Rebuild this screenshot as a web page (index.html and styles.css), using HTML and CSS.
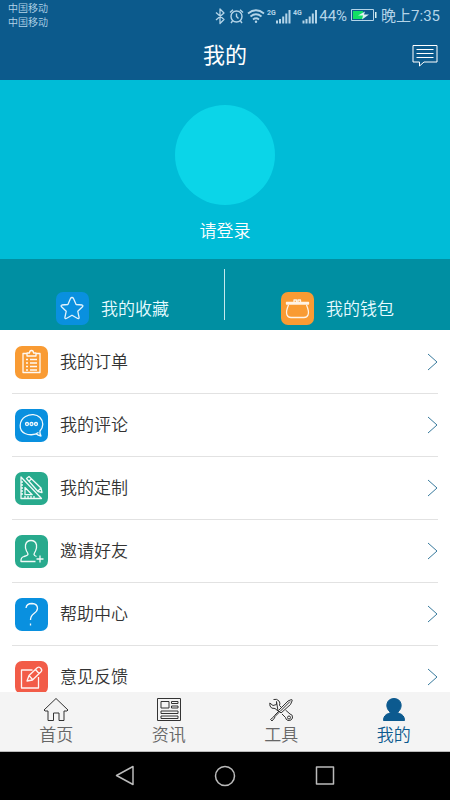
FILE: index.html
```html
<!DOCTYPE html>
<html lang="zh-CN">
<head>
<meta charset="utf-8">
<meta name="viewport" content="width=device-width, initial-scale=1">
<title>我的</title>
<link rel="stylesheet" href="styles.css">
</head>
<body>
<header class="header">
  <div class="status">
    <div class="carriers"><span>中国移动</span><span>中国移动</span></div>
    <div class="indicators">
      <svg width="104" height="18" viewBox="0 0 104 18" aria-hidden="true">
        <path d="M1 5.500l8 7-4 4V2l4 4-8 7" stroke-width="1.300"/>
        <g stroke-width="1.400"><circle cx="21.500" cy="9.500" r="5.500"/><path d="M21.500 6.500v3l2 2M15 5.500l3-2.800M28 5.500l-3-2.800M17.500 14l-1.500 2M25.500 14l1.500 2"/></g>
        <path d="M33 6.500q8-6.500 16 0M35.500 9.500q5.500-4.500 11 0M38 12.500q3-2.500 6 0" stroke-width="1.800"/><circle class="solid" cx="41" cy="14.800" r="1.200"/>
        <path class="solid" d="M61 13.500h2v3h-2zM64 12h2v4.500h-2zM67.200 9.500h2v7h-2zM70.300 6.500h2v10h-2zM73.500 3h2v13.500h-2zM87.500 13.500h2v3h-2zM90.500 12h2v4.500h-2zM93.700 9.500h2v7h-2zM96.800 6.500h2v10h-2zM100 3h2v13.500h-2z"/>
        <text x="52" y="8">2G</text><text x="78" y="8">4G</text>
      </svg>
      <span>44%</span>
      <svg class="battery" width="26" height="13" viewBox="0 0 26 13" aria-hidden="true"><rect x=".5" y=".5" width="22" height="11"/><path class="charge" d="M2 2h10v8H2z"/><path class="bolt" d="M7 6.500l7-4-1 3h5l-7 5 1-4zM24 3h1.500v6H24z"/></svg>
      <span>晚上7:35</span>
    </div>
  </div>
  <div class="titlebar">
    <h1>我的</h1>
    <button class="message" aria-label="消息"><svg width="26" height="24" viewBox="0 0 26 24"><path d="M1 1.500h24v16.500H12l-4.500 4V18H1zM4.500 5.500h17M4.500 9.500h17M4.500 13.500h17"/></svg></button>
  </div>
</header>

<main class="content">
  <section class="profile">
    <div class="avatar"></div>
    <a class="login" href="#login">请登录</a>
  </section>
  <nav class="shortcuts" aria-label="快捷入口">
    <a href="#favorites"><svg class="tile blue" viewBox="0 0 33 33"><path d="M16 5.500q1 0 1.500 1l2.600 6 6 .5q1.400.5.400 1.800l-4.700 4.500 1.300 6.200q0 1.500-1.400 1L16 23.200l-5.700 3.300q-1.400.5-1.400-1l1.300-6.200-4.700-4.500q-1-1.300.4-1.800l6-.5 2.600-6q.5-1 1.500-1z"/></svg><span>我的收藏</span></a>
    <a href="#wallet"><svg class="tile orange" viewBox="0 0 33 33"><path d="M5.500 10.500h22v1.500h-22zM7.500 13q-3 7-1.500 10 1 2.500 4 2.500h13q3 0 4-2.500 1.500-3-1.500-10M13 10V8h2.500v2m1.500 0V8h2.500v2"/></svg><span>我的钱包</span></a>
  </nav>
  <ul class="menu">
    <li><a href="#orders"><svg class="tile orange" viewBox="0 0 33 33"><path d="M11.500 7.500H8v19h17v-19h-3.500M12 10V7h2.500q0-2.500 2-2.500t2 2.500H21v3z"/><path d="M11 13.500h2m2 0h7M11 17h2m2 0h7M11 20.500h2m2 0h7M11 24h2m2 0h7"/></svg><span>我的订单</span><svg class="chevron" viewBox="0 0 11 18"><path d="M1 1l9 8-9 8"/></svg></a></li>
    <li><a href="#comments"><svg class="tile blue" viewBox="0 0 33 33"><path d="M23.500 23.500c-4 3-10 2.700-13.500 1-7-3.500-6-13 .5-17 5-3 11-2.500 14.500 1 4 4 3.500 9.500 0 13.500q-.5 3 1 5-3-.5-5-2.200"/><circle cx="12" cy="15" r="1.500"/><circle cx="16.500" cy="15" r="1.500"/><circle cx="21" cy="15" r="1.500"/></svg><span>我的评论</span><svg class="chevron" viewBox="0 0 11 18"><path d="M1 1l9 8-9 8"/></svg></a></li>
    <li><a href="#custom"><svg class="tile green" viewBox="0 0 33 33"><path d="M6 5v21.500h20.500zM10 15.500v7.200h7.200zM6 10h2M6 13h2M6 16h2M6 19h2M6 22h2M10 26v-2M13 26v-2M16 26v-2M19 26v-2M11.500 6.500l2.500-2 12 11.500 1 4.500-4-1zM14 9l2.500-2M23 19l3-3"/></svg><span>我的定制</span><svg class="chevron" viewBox="0 0 11 18"><path d="M1 1l9 8-9 8"/></svg></a></li>
    <li><a href="#invite"><svg class="tile green" viewBox="0 0 33 33"><path d="M20.500 26.500H6q-.5-4 3-5 4-1 4-2.200 0-1-1.500-3.300-1.500-3-1-6 1-4.500 5.500-4.500t5.500 4.500q.5 3-1 6-1.500 2.500-1.500 3.500t2.500 2M25 20.500v7M21.500 24h7"/></svg><span>邀请好友</span><svg class="chevron" viewBox="0 0 11 18"><path d="M1 1l9 8-9 8"/></svg></a></li>
    <li><a href="#help"><svg class="tile blue" viewBox="0 0 33 33"><path d="M11 10q.5-4.500 6-4.500 5.500.2 5.500 4.800 0 2.700-3.500 5.200t-3.500 6.500M15.500 25.500v2"/></svg><span>帮助中心</span><svg class="chevron" viewBox="0 0 11 18"><path d="M1 1l9 8-9 8"/></svg></a></li>
    <li><a href="#feedback"><svg class="tile red" viewBox="0 0 33 33"><path d="M17.500 9H6.500v18h17V16M12 20l2-5.500 8.500-8q2-1 3.500 1t0 3.200l-8.500 8.300zM14 14.500l3.500 4M20.500 8.500l3.500 4"/></svg><span>意见反馈</span><svg class="chevron" viewBox="0 0 11 18"><path d="M1 1l9 8-9 8"/></svg></a></li>
  </ul>
</main>

<nav class="tabs" aria-label="主导航">
  <a href="#home"><svg viewBox="0 0 26 26"><path d="M1 13L13 1.500 25 13l-1 1h-3v9.500h-5V16h-5.500v7.500H5V14H2z"/></svg><span>首页</span></a>
  <a href="#news"><svg viewBox="0 0 26 26"><path d="M1.500 1.500h23v22h-23zM5 4.500h8v6.500H5zM15.500 4.500H22v2h-6.500zM15.500 9H22v2h-6.500zM5 14h17v2.500H5zM5 19h17v2.500H5z"/></svg><span>资讯</span></a>
  <a href="#tools"><svg viewBox="0 0 26 26"><path d="M5.500 2.500q3.500-1 5.500 1.500 1.500 2 .5 4.500l2 2M10 14l-3-2.500Q3 12 2 9l-.2-3L5 8.500l3.500-1L8.500 4.500z"/><path d="M10.500 13.500L20 4l3.500-1.500q1 0 .5 1.500l-1.500 3.500-9.500 8.500zM12 14.500l10-10M11.500 15L7 19.500l-.5 1.500L4 24l-1.500-1.500L5.500 20l1-1.500 4.500-4.500M17.500 13l4.500 4q3 .5 2.500 4-1 3-4.500 2.500-2.500-1-2.500-3L14 17"/><circle cx="21" cy="20.500" r="1.500"/></svg><span>工具</span></a>
  <a class="active" href="#me" aria-current="page"><svg viewBox="0 0 26 26"><path d="M2.500 23.500q0-5.500 5-7l2-1C3.500 11 5 1.500 13 1.500s9.500 9.500 3.500 14l2 1q5 1.500 5 7z"/></svg><span>我的</span></a>
</nav>
<footer class="system">
  <button aria-label="返回"><svg viewBox="0 0 22 22"><path d="M19 1.500v18L2.500 10.500z"/></svg></button>
  <button aria-label="主屏幕"><svg viewBox="0 0 22 22"><circle cx="11" cy="11" r="9.500"/></svg></button>
  <button aria-label="最近任务"><svg viewBox="0 0 22 22"><path d="M2.500 2h17v17h-17z"/></svg></button>
</footer>
</body>
</html>
```
FILE: styles.css
```css
* {
  box-sizing: border-box;
}

body {
  display: flex;
  flex-direction: column;
  height: 100vh;
  margin: 0;
  background: #fff;
  color: #333;
  font-family: Roboto, "Noto Sans CJK SC", sans-serif;
  font-size: 17px;
  font-weight: 350;
  line-height: 24px;
}

a {
  color: inherit;
  text-decoration: none;
}

button {
  display: flex;
  padding: 0;
  border: 0;
  background: none;
  color: inherit;
}

svg {
  display: block;
  flex: none;
  fill: none;
  stroke: currentColor;
  stroke-linejoin: round;
}

.header {
  flex: none;
  background: #0c5a8c;
  color: #fff;
}

.status {
  display: flex;
  justify-content: space-between;
  height: 31px;
  padding: 2px 10px 0 8px;
  color: #b4d4e8;
}

.carriers {
  display: flex;
  flex-direction: column;
  font-size: 10px;
  line-height: 14px;
}

.indicators {
  display: flex;
  align-items: center;
  height: 27px;
  font-size: 15px;
  font-weight: 400;
  line-height: 20px;
}

.indicators text {
  fill: currentColor;
  stroke: none;
  font-size: 7px;
  font-weight: 700;
}

.solid {
  fill: currentColor;
  stroke: none;
}

.battery {
  margin: 0 4px;
}

.charge {
  fill: #10df65;
  stroke: none;
}

.bolt {
  fill: #d8f2f0;
  stroke: none;
}

.titlebar {
  display: grid;
  grid-template-columns: 26px 1fr 26px;
  align-items: center;
  height: 49px;
  padding: 0 12px;
}

h1 {
  grid-column: 2;
  margin: 0;
  font-size: 22px;
  font-weight: 400;
  line-height: 32px;
  text-align: center;
}

.content {
  flex: 1;
  min-height: 0;
  overflow-y: auto;
  scrollbar-width: none;
}

.profile {
  display: flex;
  flex-direction: column;
  align-items: center;
  gap: 14px;
  padding: 25px 0 16px;
  background: #00bcd7;
  color: #fff;
}

.avatar {
  width: 100px;
  height: 100px;
  border-radius: 50%;
  background: #0bd5e8;
}

.shortcuts {
  display: flex;
  position: relative;
  background: #008fa2;
  color: #e6fbff;
}

.shortcuts::after {
  content: "";
  position: absolute;
  top: 10px;
  bottom: 10px;
  left: calc(50% - 1px);
  width: 1px;
  background: #c5e9ed;
}

.shortcuts a {
  display: flex;
  flex: 1;
  align-items: center;
  justify-content: center;
  gap: 12px;
  padding: 33px 0 5px;
}

.tile {
  width: 33px;
  height: 33px;
  border-radius: 7px;
  color: #fffffff0;
  stroke-width: 1.3;
}

.shortcuts .tile {
  color: #ffffffe0;
}

.blue {
  background: #0990df;
}

.orange {
  background: #f99b33;
}

.green {
  background: #28aa8d;
}

.red {
  background: #f25c48;
}

.menu {
  margin: 0;
  padding: 1px 12px 0;
  list-style: none;
}

.menu li {
  border-bottom: 1px solid #e2e2e2;
}

.menu a {
  display: flex;
  align-items: center;
  gap: 12px;
  height: 62px;
  padding-left: 3px;
}

.chevron {
  width: 11px;
  height: 18px;
  margin-left: auto;
  color: #387a9d;
}

.tabs {
  display: flex;
  flex: none;
  height: 60px;
  padding-top: 5px;
  border-bottom: 1px solid #bbb;
  background: #f4f4f4;
  color: #666;
}

.tabs a {
  display: flex;
  flex: 1;
  flex-direction: column;
  align-items: center;
}

.tabs svg {
  width: 26px;
  height: 26px;
  color: #333;
}

.tabs .active,
.tabs .active svg {
  color: #0c5a8f;
}

.active svg {
  fill: currentColor;
}

.system {
  display: flex;
  flex: none;
  align-items: center;
  justify-content: center;
  gap: 78px;
  height: 48px;
  background: #000;
  color: #bbb;
}

.system svg {
  width: 22px;
  height: 22px;
  stroke-width: 1.5;
}
```
